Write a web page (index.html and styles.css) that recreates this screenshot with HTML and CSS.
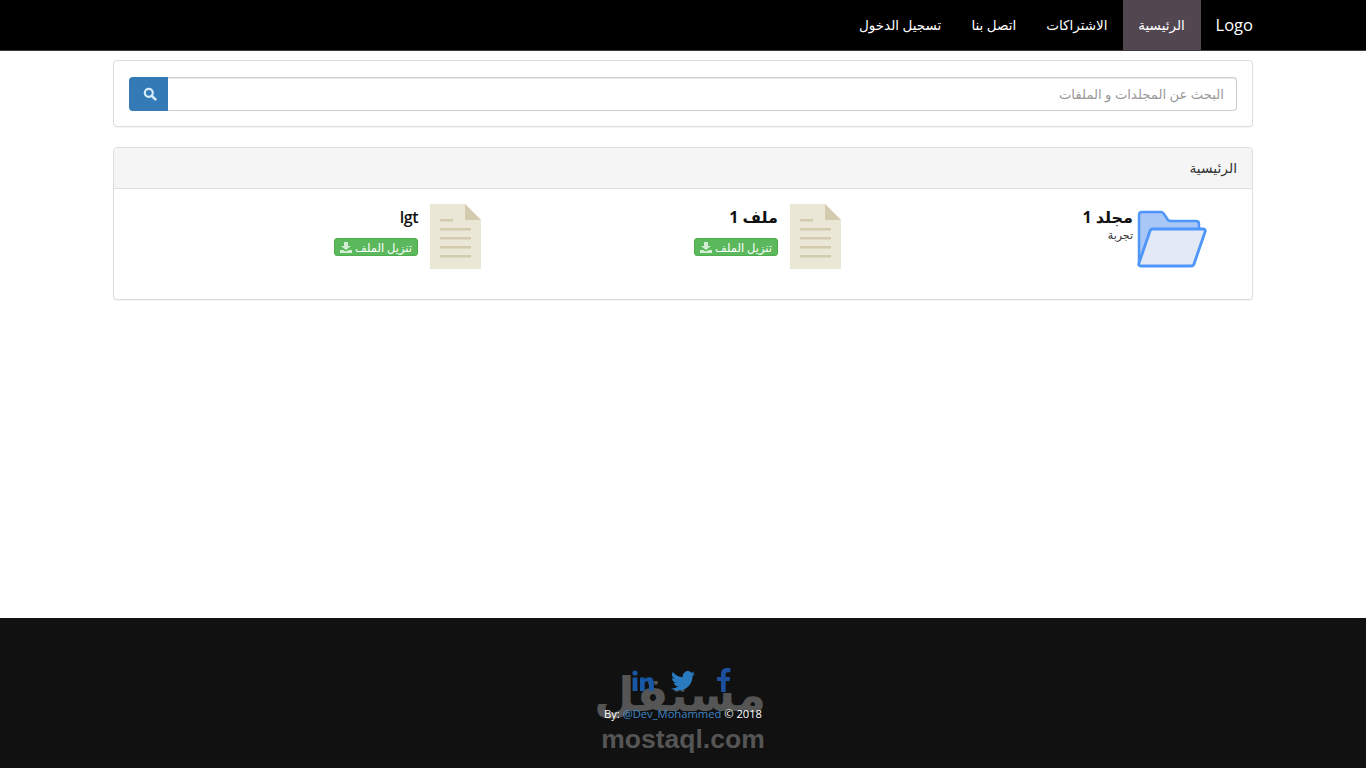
FILE: index.html
```html
<!DOCTYPE html>
<html lang="ar" dir="rtl">
<head>
    <meta charset="UTF-8">
    <title>الرئيسية</title>
    <link rel="stylesheet" href="styles.css">
</head>
<body>
    <nav class="navbar">
        <div class="container nav-inner">
            <a href="#" class="brand">Logo</a>
            <a href="#" class="nav-link active">الرئيسية</a>
            <a href="#" class="nav-link">الاشتراكات</a>
            <a href="#" class="nav-link">اتصل بنا</a>
            <a href="#" class="nav-link">تسجيل الدخول</a>
        </div>
    </nav>

    <main class="container content">
        <div class="panel search-panel">
            <div class="search-group">
                <input class="search-input" type="text" placeholder="البحث عن المجلدات و الملفات">
                <button class="search-btn" aria-label="بحث">
                    <svg width="14" height="14" viewBox="0 0 14 14"><circle cx="5.8" cy="5.8" r="4" fill="none" stroke="#d8ecf8" stroke-width="2.2"/><path d="M8.8 8.8l3.600 3.600" stroke="#d8ecf8" stroke-width="2.600" stroke-linecap="round"/></svg>
                </button>
            </div>
        </div>

        <div class="panel files-panel">
            <div class="panel-heading">الرئيسية</div>
            <div class="panel-body">
                <div class="item folder-item">
                    <svg class="folder-icon" width="70" height="58" viewBox="0 0 70 58">
                        <path d="M2 52V5q0-3 3-3h19q2 0 3 2l4 6q1 1 3 1h25q3 0 3 3v10H16z" fill="#a8c6f6" stroke="#4f96fb" stroke-width="2.500" stroke-linejoin="round"/>
                        <path d="M13 21q.5-2 3-2h50q3 0 2 3L57 54q-.7 2-3 2H4q-3 0-2-3z" fill="#e3e8f5" stroke="#4f96fb" stroke-width="2.800" stroke-linejoin="round"/>
                    </svg>
                    <div class="item-text">
                        <h4 class="item-title">مجلد 1</h4>
                        <p class="item-desc">تجربة</p>
                    </div>
                </div>

                <div class="item">
                    <svg class="file-icon" width="51" height="65" viewBox="0 0 51 65">
                        <path d="M0 0h35l16 16v49H0z" fill="#ebe7d6"/>
                        <path d="M35 0l16 16H35z" fill="#d2cbae"/>
                        <path d="M10 15h13v2.500H10zM10 24h31v2.500H10zM10 33h31v2.500H10zM10 42h31v2.500H10zM10 51h31v2.500H10z" fill="#d2cbae"/>
                    </svg>
                    <div class="item-text">
                        <h4 class="item-title">ملف 1</h4>
                        <a href="#" class="btn-download">تنزيل الملف
                            <svg width="12" height="11" viewBox="0 0 12 11"><path d="M4 0h4v4h3L6 8 1 4h3zM0 8h3l3 1.500L9 8h3v3H0z" fill="#d5ecd5"/></svg>
                        </a>
                    </div>
                </div>

                <div class="item">
                    <svg class="file-icon" width="51" height="65" viewBox="0 0 51 65">
                        <path d="M0 0h35l16 16v49H0z" fill="#ebe7d6"/>
                        <path d="M35 0l16 16H35z" fill="#d2cbae"/>
                        <path d="M10 15h13v2.500H10zM10 24h31v2.500H10zM10 33h31v2.500H10zM10 42h31v2.500H10zM10 51h31v2.500H10z" fill="#d2cbae"/>
                    </svg>
                    <div class="item-text">
                        <h4 class="item-title latin">lgt</h4>
                        <a href="#" class="btn-download">تنزيل الملف
                            <svg width="12" height="11" viewBox="0 0 12 11"><path d="M4 0h4v4h3L6 8 1 4h3zM0 8h3l3 1.500L9 8h3v3H0z" fill="#d5ecd5"/></svg>
                        </a>
                    </div>
                </div>
            </div>
        </div>
    </main>

    <footer class="footer">
        <div class="watermark" dir="rtl">
            <div class="watermark-ar">مستقل</div>
            <div class="watermark-en">mostaql.com</div>
        </div>
        <div class="social" dir="ltr">
            <svg class="icon-in" width="22" height="22" viewBox="0 0 22 22"><circle cx="3" cy="3" r="2.600"/><path d="M.6 7.500h4.800V21H.6zM8 7.500h4.600v2c1-1.500 2.500-2.300 4.200-2.300 3.400 0 5 2 5 5.800V21h-4.800v-7c0-1.800-.7-2.800-2.100-2.800s-2.200 1-2.200 2.800v7H8z"/></svg>
            <svg class="icon-tw" width="24" height="20" viewBox="0 0 24 20"><path d="M24 2.400c-.9.400-1.800.7-2.800.8 1-.6 1.800-1.600 2.200-2.700-1 .6-2 1-3.100 1.200A4.900 4.900 0 0 0 11.900 6.200C7.800 6 4.200 4 1.700.9c-1.300 2.200-.7 5.100 1.500 6.600-.8 0-1.600-.2-2.200-.6 0 2.400 1.700 4.400 3.900 4.900-.7.200-1.500.2-2.200.1.600 2 2.400 3.400 4.600 3.400A9.900 9.900 0 0 1 0 17.400 14 14 0 0 0 7.500 19.600c9.100 0 14.300-7.700 14-14.600 1-.7 1.800-1.600 2.500-2.600z"/></svg>
            <svg class="icon-fb" width="14" height="24" viewBox="0 0 14 24"><path d="M4 24V13H0V9h4V6c0-4 2.400-6 5.900-6 1.700 0 3.100.1 3.500.2v4h-2.400c-1.900 0-2.300.9-2.300 2.200V9h4.500l-.6 4H8.700v11z"/></svg>
        </div>
        <p class="credit" dir="ltr">By: <a href="#">@Dev_Mohammed</a> © 2018</p>
    </footer>
</body>
</html>
```

FILE: styles.css
```css
* {
    margin: 0;
    padding: 0;
    box-sizing: border-box;
}

body {
    font-family: 'Open Sans', 'DejaVu Sans', sans-serif;
    font-size: 14px;
    color: #333;
    background: white;
    min-height: 100vh;
    display: flex;
    flex-direction: column;
}

a {
    text-decoration: none;
}

.container {
    width: 1170px;
    margin: 0 auto;
    padding: 0 15px;
}

.navbar {
    background: #000;
    height: 51px;
    border-bottom: 1px solid #3a3a3a;
}

.nav-inner {
    display: flex;
    height: 50px;
}

.brand {
    color: white;
    font-size: 16.500px;
    line-height: 50px;
    margin-left: 15px;
}

.nav-link {
    color: white;
    font-size: 13.500px;
    line-height: 50px;
    padding: 0 15px;
}

.nav-link.active {
    background: #524650;
    min-width: 78px;
    text-align: center;
}

.content {
    flex: 1;
    padding-top: 9px;
}

.panel {
    background: white;
    border: 1px solid #ddd;
    border-radius: 4px;
    margin-bottom: 20px;
    box-shadow: 0 1px 1px rgba(0,0,0,0.05);
}

.search-panel {
    height: 67px;
    padding: 16px 15px;
}

.search-group {
    display: flex;
    height: 34px;
}

.search-input {
    flex: 1;
    border: 1px solid #ccc;
    border-left: none;
    border-radius: 0 4px 4px 0;
    padding: 0 12px;
    font-family: inherit;
    font-size: 13.200px;
    box-shadow: inset 0 1px 1px rgba(0,0,0,0.075);
}

.search-input::placeholder {
    color: #999;
}

.search-btn {
    width: 39px;
    padding-left: 2px;
    background: #337ab7;
    border: none;
    border-radius: 4px 0 0 4px;
    display: flex;
    align-items: center;
    justify-content: center;
}

.panel-heading {
    background: #f5f5f5;
    border-bottom: 1px solid #ddd;
    height: 41px;
    line-height: 40px;
    padding: 0 15px;
    font-size: 13.800px;
    border-radius: 3px 3px 0 0;
}

.panel-body {
    display: grid;
    grid-template-columns: 366px 360px 360px;
    height: 110px;
    padding: 15px 45px 0 0;
}

.item {
    display: flex;
    gap: 12px;
    align-items: flex-start;
}

.folder-item {
    gap: 4px;
}

.folder-icon {
    margin-top: 6px;
}

.item-text {
    padding-top: 3px;
}

.item-title {
    font-size: 16px;
    font-weight: 700;
    line-height: 20px;
    color: #111;
}

.item-title.latin {
    font-size: 16px;
    font-weight: 600;
    letter-spacing: -0.5px;
}

.item-desc {
    font-size: 11px;
    line-height: 16px;
    color: #333;
}

.btn-download {
    display: flex;
    align-items: center;
    gap: 3px;
    margin-top: 11px;
    height: 18px;
    padding: 0 5px;
    background: #5cb85c;
    border: 1px solid #4cae4c;
    border-radius: 3px;
    color: white;
    font-size: 11.500px;
    white-space: nowrap;
}

.footer {
    position: relative;
    height: 150px;
    background: #111;
    overflow: hidden;
}

.watermark {
    position: absolute;
    top: 50px;
    left: 600px;
    width: 166px;
    text-align: center;
    color: #555;
    font-weight: 700;
}

.watermark-ar {
    font-family: 'DejaVu Sans', sans-serif;
    font-size: 47px;
    line-height: 54px;
    white-space: nowrap;
}

.watermark-en {
    font-family: 'Liberation Sans', sans-serif;
    font-size: 26.500px;
    line-height: 34px;
    direction: ltr;
    white-space: nowrap;
}

.social {
    position: absolute;
    top: 50px;
    left: 632px;
    width: 100px;
    display: flex;
    align-items: flex-start;
}

.icon-in {
    fill: #1857a4;
    margin-top: 2px;
}

.icon-tw {
    fill: #2a7ac0;
    margin: 3px 0 0 17px;
}

.icon-fb {
    fill: #1c4f9c;
    margin-left: 22px;
}

.credit {
    position: absolute;
    top: 88px;
    left: 0;
    right: 0;
    text-align: center;
    font-size: 11.200px;
    color: white;
}

.credit a {
    color: #3f85c4;
}
```
